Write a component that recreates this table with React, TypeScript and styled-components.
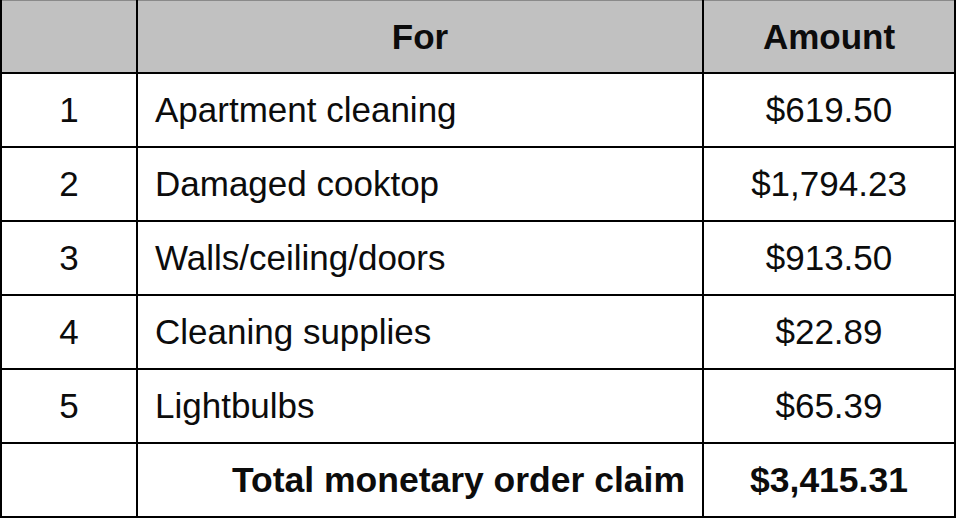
import React from "react";
import styled, { createGlobalStyle } from "styled-components";

const GlobalStyle = createGlobalStyle`
    html, body {
        margin: 0;
        padding: 0;
        background: #ffffff;
    }
    body {
        font-family: "Liberation Sans", Arial, sans-serif;
        color: #0c0c0c;
    }
`;

export const Wrapper = styled('div')`
    width: 960px;
    height: 521px;
    overflow: hidden;
`;

export const ClaimTable = styled('table')`
    width: 954px;
    border-collapse: collapse;
    table-layout: fixed;
    border-top: 1px solid #8a8a8a;
    border-left: 2px solid #000000;
    border-right: 2px solid #000000;
    border-bottom: 2px solid #000000;
    font-size: 35px;
`;

export const HeadCell = styled('th')`
    height: 71px;
    background: #c1c1c1;
    font-weight: bold;
    text-align: center;
    vertical-align: middle;
    padding: 0;
    border: 2px solid #000000;
    border-top: none;
`;

type CellProps = { $align?: "left" | "center" | "right"; $bold?: boolean };

export const Cell = styled('td')<CellProps>`
    height: 72px;
    padding: 0 17px;
    text-align: ${p => p.$align || "center"};
    font-weight: ${p => (p.$bold ? "bold" : "normal")};
    font-size: ${p => (p.$bold ? "35.5px" : "35px")};
    vertical-align: middle;
    border: 2px solid #000000;
    white-space: nowrap;
`;

const items = [
    { no: 1, label: "Apartment cleaning", amount: "$619.50" },
    { no: 2, label: "Damaged cooktop", amount: "$1,794.23" },
    { no: 3, label: "Walls/ceiling/doors", amount: "$913.50" },
    { no: 4, label: "Cleaning supplies", amount: "$22.89" },
    { no: 5, label: "Lightbulbs", amount: "$65.39" },
];

export default function App() {
    return (
        <Wrapper>
            <GlobalStyle />
            <ClaimTable>
                <colgroup>
                    <col style={{ width: 136 }} />
                    <col style={{ width: 566 }} />
                    <col style={{ width: 252 }} />
                </colgroup>
                <thead>
                    <tr>
                        <HeadCell />
                        <HeadCell>For</HeadCell>
                        <HeadCell>Amount</HeadCell>
                    </tr>
                </thead>
                <tbody>
                    {items.map(item => (
                        <tr key={item.no}>
                            <Cell>{item.no}</Cell>
                            <Cell $align="left">{item.label}</Cell>
                            <Cell>{item.amount}</Cell>
                        </tr>
                    ))}
                    <tr>
                        <Cell />
                        <Cell $align="right" $bold>Total monetary order claim</Cell>
                        <Cell $bold>$3,415.31</Cell>
                    </tr>
                </tbody>
            </ClaimTable>
        </Wrapper>
    );
}
